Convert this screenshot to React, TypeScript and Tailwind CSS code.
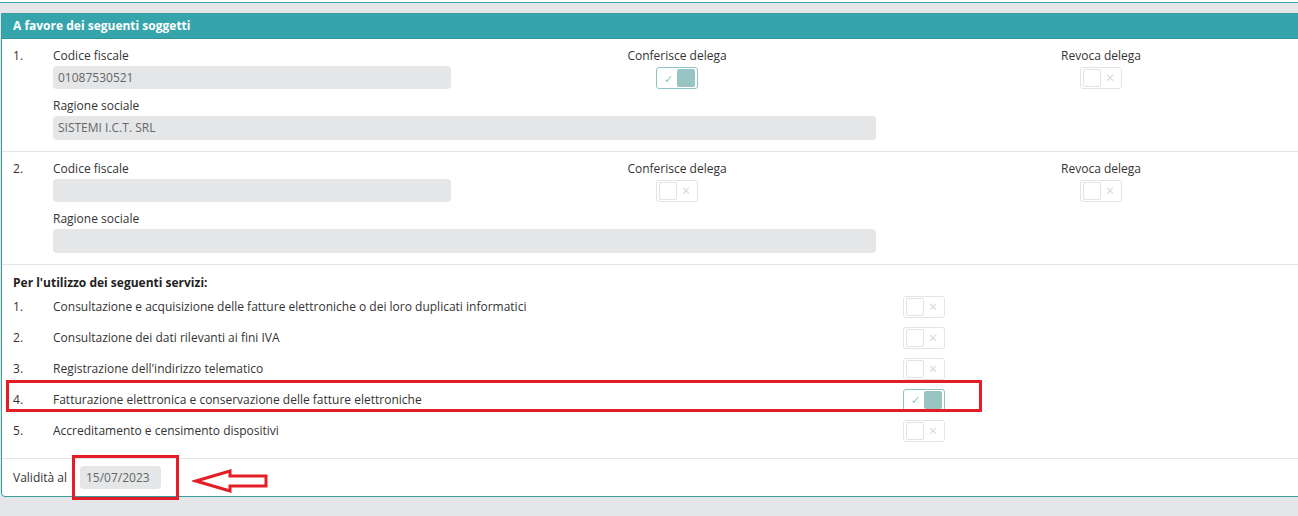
import React from "react"

const FONT = { fontFamily: '"Open Sans", "Noto Sans", Arial, sans-serif' }

function Toggle({ on }: { on?: boolean }) {
    if (on) {
        return (
            <div className="w-[42px] h-[22px] rounded-[3px] border border-[#8fc3c3] bg-white flex items-center justify-between px-[2px]">
                <span className="w-[18px] text-center text-[11px] leading-none text-[#8cc4c4]">✓</span>
                <span className="w-[18px] h-[18px] rounded-[2px] bg-[#99c4c4]" />
            </div>
        )
    }
    return (
        <div className="w-[42px] h-[22px] rounded-[3px] border border-[#e2e4e6] bg-white flex items-center justify-between px-[2px]">
            <span className="w-[18px] h-[18px] rounded-[2px] border border-[#e2e4e6] bg-white" />
            <span className="w-[18px] text-center text-[14px] leading-none text-[#d3d6d8]">×</span>
        </div>
    )
}

function Field({ value, width }: { value: string; width: string }) {
    return (
        <div className={`${width} h-[23px] rounded-[4px] bg-[#e5e6e8] flex items-center px-[5px] text-[12px] text-[#666]`}>
            {value}
        </div>
    )
}

function Subject({ n, cf, rs, on }: { n: number; cf: string; rs: string; on?: boolean }) {
    return (
        <div className="pl-[11px] pt-[8px] pb-[11px] border-b border-[#e3e4e6]">
            <div className="flex">
                <div className="w-[40px] leading-[18px] text-[12px] text-[#333]">{n}.</div>
                <div className="w-[398px]">
                    <div className="leading-[18px] text-[12px] text-[#333]">Codice fiscale</div>
                    <div className="mt-[1px]">
                        <Field value={cf} width="w-[398px]" />
                    </div>
                </div>
                <div className="w-[452px] flex flex-col items-center">
                    <div className="leading-[18px] text-[12px] text-[#333]">Conferisce delega</div>
                    <div className="mt-[2px]">
                        <Toggle on={on} />
                    </div>
                </div>
                <div className="w-[396px] flex flex-col items-center">
                    <div className="leading-[18px] text-[12px] text-[#333]">Revoca delega</div>
                    <div className="mt-[2px]">
                        <Toggle />
                    </div>
                </div>
            </div>
            <div className="ml-[40px] mt-[8px]">
                <div className="leading-[18px] text-[12px] text-[#333]">Ragione sociale</div>
                <div className="mt-[1px]">
                    <Field value={rs} width="w-[823px] h-[24px]" />
                </div>
            </div>
        </div>
    )
}

const services = [
    "Consultazione e acquisizione delle fatture elettroniche o dei loro duplicati informatici",
    "Consultazione dei dati rilevanti ai fini IVA",
    "Registrazione dell'indirizzo telematico",
    "Fatturazione elettronica e conservazione delle fatture elettroniche",
    "Accreditamento e censimento dispositivi",
]

export default function App() {
    return (
        <div className="w-[1298px] h-[516px] overflow-hidden bg-[#e4e6e9]" style={FONT}>
            <div className="h-[3px] bg-white border-b border-[#35a5ab]" />
            <div className="pt-[10px] pl-[1px]">
                <div className="w-[1320px] bg-white border border-[#3a9a9c] rounded-bl-[4px]">
                    <div className="h-[25px] bg-[#35a5ab] border-b border-[#2e9599] flex items-center px-[11px] text-[12px] font-bold text-white">
                        A favore dei seguenti soggetti
                    </div>
                    <Subject n={1} cf="01087530521" rs="SISTEMI I.C.T. SRL" on />
                    <Subject n={2} cf="" rs="" />
                    <div className="pl-[11px] pt-[10px] pb-[12px] border-b border-[#e3e4e6]">
                        <div className="leading-[16px] text-[12px] font-bold text-[#222]">Per l'utilizzo dei seguenti servizi:</div>
                        {services.map((s, i) => (
                            <div key={i} className="relative h-[31px] flex items-center text-[12px] text-[#333]">
                                <div className="w-[40px]">{i + 1}.</div>
                                <div className="w-[850px]">{s}</div>
                                <Toggle on={i === 3} />
                                {i === 3 && (
                                    <div className="absolute left-[-7px] top-[-4px] w-[976px] h-[32px] border-[3px] border-[#e41e26]" />
                                )}
                            </div>
                        ))}
                    </div>
                    <div className="relative pl-[11px] pt-[7px] pb-[7px] flex items-center text-[12px] text-[#333]">
                        <div className="w-[67px]">Validità al</div>
                        <div className="w-[81px] h-[23px] rounded-[4px] bg-[#e5e6e8] flex items-center px-[6px] text-[#666]">
                            15/07/2023
                        </div>
                        <div className="absolute left-[70px] top-[-4px] w-[107px] h-[45px] border-[3px] border-[#e41e26]" />
                        <svg className="absolute left-[190px] top-[10px]" width="78" height="24" viewBox="0 0 78 24">
                            <path
                                d="M4 12 L38 2 L38 7 L74 7 L74 17 L38 17 L38 22 Z"
                                fill="none"
                                stroke="#e41e26"
                                strokeWidth="3"
                                strokeLinejoin="miter"
                            />
                        </svg>
                    </div>
                </div>
            </div>
        </div>
    )
}
